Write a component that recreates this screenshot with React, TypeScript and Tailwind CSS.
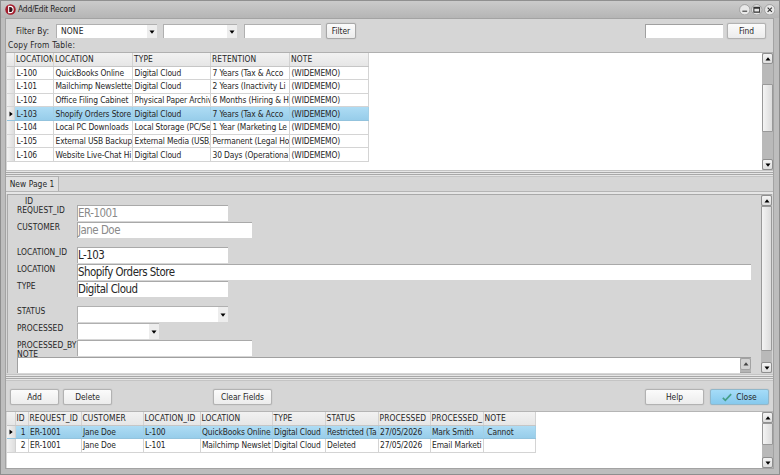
import React from "react";
import clsx from "clsx";

type Column = {
  name: string;
  width: string;
  align?: "right";
};

const LOCATION_COLUMNS: Column[] = [
  { name: "LOCATION", width: "w-[39px]" },
  { name: "LOCATION", width: "w-[79px]" },
  { name: "TYPE", width: "w-[78px]" },
  { name: "RETENTION", width: "w-[79px]" },
  { name: "NOTE", width: "w-[79px]" },
];

const LOCATIONS = [
  ["L-100", "QuickBooks Online", "Digital Cloud", "7 Years (Tax & Acco", "(WIDEMEMO)"],
  ["L-101", "Mailchimp Newslette", "Digital Cloud", "2 Years (Inactivity Li", "(WIDEMEMO)"],
  ["L-102", "Office Filing Cabinet", "Physical Paper Archiv", "6 Months (Hiring & H", "(WIDEMEMO)"],
  ["L-103", "Shopify Orders Store", "Digital Cloud", "7 Years (Tax & Acco", "(WIDEMEMO)"],
  ["L-104", "Local PC Downloads", "Local Storage (PC/Se", "1 Year (Marketing Le", "(WIDEMEMO)"],
  ["L-105", "External USB Backup", "External Media (USB,", "Permanent (Legal Ho", "(WIDEMEMO)"],
  ["L-106", "Website Live-Chat Hi", "Digital Cloud", "30 Days (Operationa", "(WIDEMEMO)"],
];

const REQUEST_COLUMNS: Column[] = [
  { name: "ID", width: "w-[13px]", align: "right" },
  { name: "REQUEST_ID", width: "w-[53px]" },
  { name: "CUSTOMER", width: "w-[62px]" },
  { name: "LOCATION_ID", width: "w-[57px]" },
  { name: "LOCATION", width: "w-[72px]" },
  { name: "TYPE", width: "w-[53px]" },
  { name: "STATUS", width: "w-[53px]" },
  { name: "PROCESSED", width: "w-[52px]" },
  { name: "PROCESSED_", width: "w-[53px]" },
  { name: "NOTE", width: "w-[52px]" },
];

const REQUESTS = [
  ["1", "ER-1001", "Jane Doe", "L-100", "QuickBooks Online", "Digital Cloud", "Restricted (Ta", "27/05/2026", "Mark Smith", "\u00a0Cannot"],
  ["2", "ER-1001", "Jane Doe", "L-101", "Mailchimp Newslet", "Digital Cloud", "Deleted", "27/05/2026", "Email Marketi", ""],
];

const Triangle = ({ dir, className }: { dir: "up" | "down" | "right"; className?: string }) => (
  <svg
    viewBox="0 0 6 6"
    className={clsx("h-1.5 w-1.5 shrink-0", dir === "up" && "rotate-180", dir === "right" && "-rotate-90", className)}
  >
    <path d="M0.5 1.5h5L3 4.7z" fill="currentColor" />
  </svg>
);

const ScrollButton = ({ dir }: { dir: "up" | "down" }) => (
  <div className="flex h-[11px] w-full shrink-0 items-center justify-center rounded-[2px] border border-[#8f8f8f] bg-linear-to-b from-[#f4f4f4] to-[#dedede] text-black">
    <Triangle dir={dir} />
  </div>
);

const ScrollBar = ({ offset, thumb }: { offset: string; thumb: string }) => (
  <div className="flex h-full w-[11px] shrink-0 flex-col bg-[#b9b9b9]">
    <ScrollButton dir="up" />
    <div className={clsx("flex min-h-0 flex-1 flex-col", offset)}>
      <div className={clsx("rounded-[1px] border border-[#999] bg-linear-to-r from-[#f4f4f4] to-[#dcdcdc]", thumb)} />
    </div>
    <ScrollButton dir="down" />
  </div>
);

const Button = ({ children, className }: { children: React.ReactNode; className?: string }) => (
  <button
    className={clsx(
      "flex h-4 items-center justify-center rounded-[2px] border pt-px whitespace-nowrap shadow-[0_0_1px_#999]",
      className,
    )}
  >
    {children}
  </button>
);

const Select = ({ value, className }: { value?: string; className: string }) => (
  <div className={clsx("flex border-t border-l border-[#b0b0b0] bg-white", className)}>
    <span className="flex flex-1 items-center pl-1 tracking-[0.15px]">{value}</span>
    <span className="flex w-2.5 items-center justify-center bg-[#ededed] text-black">
      <Triangle dir="down" />
    </span>
  </div>
);

const DataGrid = ({ columns, rows, selected, gutter }: {
  columns: Column[];
  rows: string[][];
  selected: number;
  gutter: string;
}) => (
  <div className="flex flex-1 flex-col items-start overflow-hidden bg-white">
    <div className="flex h-[13.5px] border-b border-[#c6c6c6] bg-linear-to-b from-[#f2f2f2] to-[#e6e6e6] tracking-[0.1px]">
      <div className={clsx("border-r border-[#d2d2d2]", gutter)} />
      {columns.map((col, i) => (
        <div
          key={i}
          className={clsx("flex items-center overflow-hidden border-r border-[#d2d2d2] pl-px whitespace-nowrap", col.width)}
        >
          {col.name}
        </div>
      ))}
    </div>
    {rows.map((row, i) => (
      <div
        key={i}
        className={clsx(
          "flex h-[13.67px] border-b tracking-[-0.13px]",
          i === selected ? "border-[#93c3dd] bg-linear-to-b from-[#aedcf4] to-[#97cdea]" : "border-[#d4d4d4]",
        )}
      >
        <div
          className={clsx("flex items-center justify-center border-r border-[#d2d2d2] bg-linear-to-r from-[#f2f2f2] to-[#dedede]", gutter)}
        >
          {i === selected && <Triangle dir="right" className="text-black" />}
        </div>
        {row.map((cell, j) => (
          <div
            key={j}
            className={clsx(
              "flex items-center overflow-hidden border-r pl-[1.5px] whitespace-nowrap",
              columns[j].width,
              columns[j].align === "right" && "justify-end pr-0.5",
              i === selected ? "border-[#a3cfe5]" : "border-[#d4d4d4]",
            )}
          >
            {cell}
          </div>
        ))}
      </div>
    ))}
  </div>
);

const Splitter = () => (
  <div className="flex h-[7px] shrink-0 flex-col justify-between border-y border-[#c4c4c4] bg-[#e6e6e6] py-px">
    <div className="h-px bg-[#a8a8a8]" />
    <div className="h-px bg-[#a8a8a8]" />
  </div>
);

const FieldRow = ({ label, children }: { label: string; children: React.ReactNode }) => (
  <div className="flex h-[16.9px] shrink-0 items-start">
    <span className="w-[60px] shrink-0 pt-px leading-[9px] tracking-[0.04px] whitespace-pre">{label}</span>
    {children}
  </div>
);

const TextField = ({ value, className }: { value?: string; className: string }) => (
  <div className={clsx("h-4 border-t border-l border-[#a9a9a9] bg-white text-[11.4px] leading-[15px] tracking-[-0.48px]", className)}>
    {value}
  </div>
);

const TitleBar = () => (
  <div className="flex h-[18px] shrink-0 items-center border-t border-[#909090] bg-linear-to-b from-[#cbcbcb] to-[#b5b5b5] pr-1 pl-1">
    <svg viewBox="0 0 12 12" className="mr-[2px] h-[11px] w-[11px]">
      <circle cx="6" cy="6" r="5.7" fill="#a51c2c" />
      <path d="M4 2.6h1.5a3.4 3.4 0 0 1 0 6.8H4z" fill="#351015" stroke="#fff" strokeWidth="1.2" />
    </svg>
    <span className="flex-1 text-[8.4px] tracking-[-0.2px]">Add/Edit Record</span>
    <div className="flex gap-px">
      {["M3.5 7.5h5", "M3 3.5h6v5h-6zM3 4.3h6", "M3.8 3.8l4.4 4.4M8.2 3.8l-4.4 4.4"].map((d) => (
        <svg key={d} viewBox="0 0 12 12" className="h-[11.5px] w-[11.5px]">
          <circle cx="6" cy="6" r="5.4" fill="#e8e8e8" stroke="#8c8c8c" strokeWidth="0.7" />
          <path d={d} fill="none" stroke="#303030" strokeWidth="1.1" />
        </svg>
      ))}
    </div>
  </div>
);

const App = () => {
  return (
    <div className="flex h-[475px] w-[780px] flex-col overflow-hidden border-r border-b border-l border-[#8e8e8e] bg-[#bdbdbd] font-['DejaVu_Sans_Condensed','DejaVu_Sans',sans-serif] text-[8.4px] leading-none tracking-[-0.05px] text-[#262626] [font-stretch:condensed]">
      <TitleBar />

      <div className="mr-[5px] ml-1 flex h-[451px] flex-col border border-[#a3a3a3] bg-[#d6d6d6]">
        {/* Filter bar */}
        <div className="flex h-[34px] shrink-0 flex-col border-b border-[#b0b0b0] pl-0.5">
          <div className="flex h-[21px] items-end pr-[7px] pb-px pl-2">
            <span className="mr-[7px] w-[33px] pb-1 tracking-[0.05px] whitespace-nowrap">Filter By:</span>
            <Select value="NONE" className="mb-px h-3.5 w-[101px]" />
            <Select className="mb-px ml-1.5 h-3.5 w-[74px]" />
            <div className="mb-px ml-[7px] h-3.5 w-[77px] border-t border-l border-[#b0b0b0] bg-white" />
            <Button className="ml-[5px] w-[30px] border-[#a8a8a8] bg-linear-to-b from-[#fbfbfb] to-[#ececec]">Filter</Button>
            <div className="mb-px ml-auto h-3.5 w-[78px] border-t border-l border-[#a0a0a0] bg-white" />
            <Button className="ml-[4px] w-[39px] border-[#b2b2b2] bg-linear-to-b from-[#fbfbfb] to-[#ececec]">Find</Button>
          </div>
          <span className="pt-px tracking-[0.17px]">Copy From Table:</span>
        </div>

        {/* Source table */}
        <div className="flex h-[117px] shrink-0 pl-px">
          <DataGrid columns={LOCATION_COLUMNS} rows={LOCATIONS} selected={3} gutter="w-2" />
          <ScrollBar offset="pt-[20px]" thumb="h-[48px]" />
        </div>

        <Splitter />

        {/* Record form */}
        <div className="flex h-[197px] shrink-0 flex-col">
          <div className="flex h-[15px] shrink-0 items-end border-b border-[#b5b5b5]">
            <div className="flex h-[15px] w-[53px] items-center justify-center border-t border-r border-[#b0b0b0] bg-[#e0e0e0] pt-px tracking-[0.05px] whitespace-nowrap">
              New Page 1
            </div>
          </div>
          <div className="flex flex-1 flex-col border-t-2 border-[#e6e6e6] pr-px pl-px">
            <div className="flex h-[179px] overflow-hidden border-t border-l border-[#a9a9a9]">
              <div className="flex min-w-0 flex-1 flex-col pl-[9px]">
                <div className="h-[10px] shrink-0 pt-[2px] pl-2">ID</div>
                <FieldRow label="REQUEST_ID">
                  <TextField value="ER-1001" className="w-[151px] text-[#8a8a8a]" />
                </FieldRow>
                <FieldRow label="CUSTOMER">
                  <TextField value="Jane Doe" className="w-[175px] text-[#8a8a8a]" />
                </FieldRow>
                <div className="h-[8.5px] shrink-0" />
                <FieldRow label="LOCATION_ID">
                  <TextField value="L-103" className="w-[151px]" />
                </FieldRow>
                <FieldRow label="LOCATION">
                  <TextField value="Shopify Orders Store" className="w-[674px]" />
                </FieldRow>
                <FieldRow label="TYPE">
                  <TextField value="Digital Cloud" className="w-[151px]" />
                </FieldRow>
                <div className="h-[8.5px] shrink-0" />
                <FieldRow label="STATUS">
                  <Select className="h-4 w-[151px]" />
                </FieldRow>
                <FieldRow label="PROCESSED">
                  <Select className="h-4 w-[82px]" />
                </FieldRow>
                <FieldRow label={"PROCESSED_BY\nNOTE"}>
                  <TextField className="w-[175px]" />
                </FieldRow>
                <div className="flex h-[17px] w-[734px] shrink-0 justify-end overflow-hidden border-t border-l border-[#a0a0a0] bg-white">
                  <div className="w-[11px] bg-[#b4b4b4]">
                    <div className="flex h-3 items-center justify-center rounded-[2px] border border-[#a2a2a2] bg-[#d2d2d2] text-[#444]">
                      <Triangle dir="up" />
                    </div>
                    <div className="mt-0.5 h-4 border border-[#a2a2a2] bg-[#d2d2d2]" />
                  </div>
                </div>
              </div>
              <ScrollBar offset="" thumb="h-[145px]" />
            </div>
          </div>
        </div>

        <Splitter />

        {/* Actions */}
        <div className="flex h-[31px] shrink-0 items-center border-b border-[#b5b5b5] pt-px pr-1 pl-1">
          <Button className="mr-[4px] w-[49px] border-[#b2b2b2] bg-linear-to-b from-[#fbfbfb] to-[#ececec]">Add</Button>
          <Button className="w-[49px] border-[#b2b2b2] bg-linear-to-b from-[#fbfbfb] to-[#ececec]">Delete</Button>
          <Button className="ml-[101px] w-[59px] border-[#b2b2b2] bg-linear-to-b from-[#fbfbfb] to-[#ececec]">Clear Fields</Button>
          <Button className="mr-1.5 ml-auto w-[59px] border-[#b2b2b2] bg-linear-to-b from-[#fbfbfb] to-[#ececec]">Help</Button>
          <Button className="w-[59px] border-[#91b7ca] bg-linear-to-b from-[#a5dcf8] to-[#86c9ed]">
            <svg viewBox="0 0 12 10" className="mr-1 h-[9px] w-2.5">
              <path d="M1 5.5l3 3L11 1" fill="none" stroke="#459f88" strokeWidth="2" />
            </svg>
            Close
          </Button>
        </div>

        {/* Saved requests */}
        <div className="flex min-h-0 flex-1 pl-px">
          <DataGrid columns={REQUEST_COLUMNS} rows={REQUESTS} selected={0} gutter="w-[8.5px]" />
          <ScrollBar offset="" thumb="h-[22px]" />
        </div>
      </div>
    </div>
  );
};

export default App;
